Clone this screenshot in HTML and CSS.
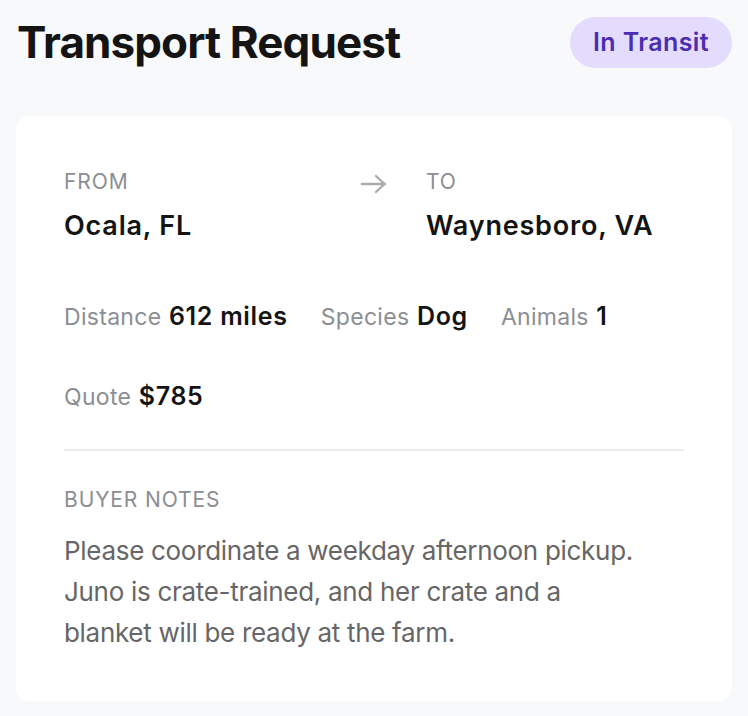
FILE: index.html
```html
<!DOCTYPE html>
<html lang="en">
<head>
  <meta charset="UTF-8" />
  <meta name="viewport" content="width=device-width, initial-scale=1" />
  <title>Transport Request</title>
  <link rel="stylesheet" href="styles.css">
</head>
<body>
  <div class="page">
    <div class="header">
      <h1>Transport Request</h1>
      <span class="badge">In Transit</span>
    </div>

    <div class="card">
      <div class="route">
        <div class="place">
          <div class="label">From</div>
          <div class="city">Ocala, FL</div>
        </div>
        <svg class="arrow" width="28" height="20" viewBox="0 0 28 20" fill="none" stroke="#a9abae" stroke-width="2.4" stroke-linecap="round" stroke-linejoin="round">
          <path d="M2 10h23M16 2l8.5 8L16 18" />
        </svg>
        <div class="place">
          <div class="label">To</div>
          <div class="city">Waynesboro, VA</div>
        </div>
      </div>

      <div class="stats">
        <div class="stat"><span class="stat-label">Distance</span> <b>612 miles</b></div>
        <div class="stat"><span class="stat-label">Species</span> <b>Dog</b></div>
        <div class="stat"><span class="stat-label">Animals</span> <b>1</b></div>
        <div class="stat"><span class="stat-label">Quote</span> <b>$785</b></div>
      </div>

      <div class="notes">
        <div class="label">Buyer Notes</div>
        <p>Please coordinate a weekday afternoon pickup. Juno is crate-trained, and her crate and a blanket will be ready at the farm.</p>
      </div>
    </div>
  </div>
</body>
</html>
```

FILE: styles.css
```css
body {
  font-family: Inter, "Noto Sans", sans-serif;
  background-color: #f8f9fb;
  margin: 0;
  color: #141414;
}
.page {
  padding: 17px 16px 16px 16px;
}
.header {
  display: flex;
  justify-content: space-between;
  align-items: center;
  margin-bottom: 48px;
}
h1 {
  margin: 0;
  padding-left: 1px;
  font-size: 44px;
  font-weight: 700;
  letter-spacing: -0.9px;
  line-height: 51px;
}
.badge {
  display: inline-block;
  height: 51px;
  line-height: 51px;
  padding: 0 23px;
  border-radius: 26px;
  background-color: #e4dcfd;
  color: #4a2db0;
  font-size: 25px;
  font-weight: 600;
  letter-spacing: 0.4px;
}
.card {
  background: #fff;
  border-radius: 14px;
  padding: 52px 48px 48px 48px;
}
.route {
  display: grid;
  grid-template-columns: 1fr auto 1fr;
  column-gap: 38px;
  align-items: start;
}
.arrow {
  margin-top: 6px;
}
.label {
  font-size: 21px;
  color: #8b8e92;
  text-transform: uppercase;
  letter-spacing: 0.9px;
  line-height: 28px;
}
.city {
  font-size: 27px;
  font-weight: 600;
  letter-spacing: 0.8px;
  margin-top: 14px;
  line-height: 32px;
}
.stats {
  display: flex;
  flex-wrap: wrap;
  column-gap: 33px;
  row-gap: 45px;
  margin-top: 58px;
  padding-bottom: 34px;
  border-bottom: 2px solid #ececec;
}
.stat {
  line-height: 32px;
}
.stat-label {
  font-size: 23px;
  color: #8b8e92;
  letter-spacing: 0.3px;
}
.stat b {
  margin-left: 3px;
  font-size: 25px;
  font-weight: 600;
  letter-spacing: 0.7px;
}
.notes {
  padding-top: 35px;
}
.notes p {
  max-width: 588px;
  margin: 16px 0 0 0;
  font-size: 26px;
  line-height: 41px;
  letter-spacing: -0.3px;
  color: #666;
}
```
